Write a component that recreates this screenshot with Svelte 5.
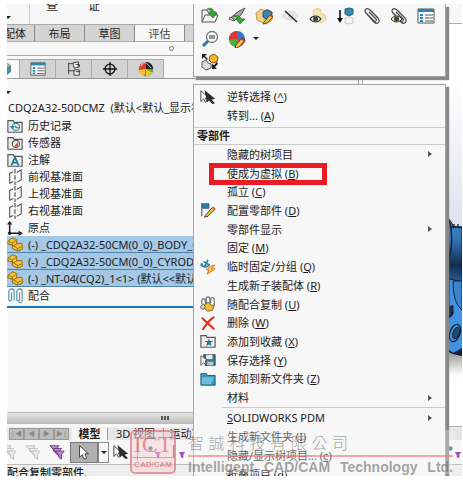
<script>
  const tree = [
    ['history', '历史记录'],
    ['sensor', '传感器'],
    ['note', '注解'],
    ['plane', '前视基准面'],
    ['plane', '上视基准面'],
    ['plane', '右视基准面'],
    ['origin', '原点'],
    ['part', '(-) _CDQ2A32-50CM(0_0)_BODY_CDQ2', true],
    ['part', '(-) _CDQ2A32-50CM(0_0)_CYROD_CDQ2', true],
    ['part', '(-) _NT-04(CQ2)_1<1> (默认<<默认>', true],
    ['mates', '配合'],
  ];
  const main = [
    ['', '隐藏的树项目', '', true],
    ['', '使成为虚拟', 'B'],
    ['', '孤立', 'C'],
    ['configure', '配置零部件', 'D'],
    ['', '零部件显示', '', true],
    ['', '固定', 'M'],
    ['group', '临时固定/分组', 'Q'],
    ['', '生成新子装配体', 'R'],
    ['copymates', '随配合复制', 'U'],
    ['delete', '删除', 'W'],
    ['favorite', '添加到收藏', 'X'],
    ['save', '保存选择', 'Y'],
    ['bluefolder', '添加到新文件夹', 'Z'],
    ['', '材料', '', true],
  ];
  const tools = ['open', 'opendrawing', 'editpart', 'hide', 'transparency', 'suppress', 'clip', 'clipeye', 'list'];
</script>

{#snippet icon(name)}
  <svg class="icon" viewBox="0 0 18 18" aria-hidden="true">
    {#if name === 'open'}
      <path d="M1 15V3h5l1 2h8v3" fill="#eee" stroke="#555" />
      <path d="M1 15 4 8h13l-3 7z" fill="#f4f4f4" stroke="#555" />
      <path d="M6 2c4-2 7 0 7 4h3l-4 5-5-5h3c0-2-1-3-4-4z" fill="#35a832" stroke="#147018" stroke-width=".6" />
    {:else if name === 'opendrawing'}
      <path d="M1 12 11 4l6-3-4 7-7 6z" fill="#a5a5a5" stroke="#555" />
      <path d="M1 11c2-1 5 0 5 3" fill="#eee" stroke="#444" />
      <path d="M5 9c4-1 8 0 8 3h4l-5 5-4-5h2c0-2-2-3-5-3z" fill="#35a832" stroke="#147018" stroke-width=".6" />
    {:else if name === 'editpart'}
      <path d="m1 6 5-4 4 2 2-2 5 3v8l-6 4-9-4z" fill="#f2cf87" stroke="#c39a4d" />
      <path d="m8 5 4-2 5 2-1 6-4 2-4-3z" fill="#3c86b4" stroke="#245876" />
      <path d="m9 15 6-7 3 2-6 6-4 1z" fill="#f5c33d" stroke="#333" stroke-width=".8" />
      <path d="m15 8 3 2" stroke="#d33" stroke-width="2" />
    {:else if name === 'hide'}
      <path d="M1 9c4-6 11-6 15 0-4 5-11 5-15 0z" fill="#eee" stroke="#ccc" />
      <circle cx="9" cy="9" r="3" fill="#ddd" />
      <path d="m3 4 12 11" stroke="#222" stroke-width="1.4" />
    {:else if name === 'transparency'}
      <path d="m4 4 4-3 4 2v4l4 1 1 5-5 3-6-3z" fill="#f6e6b8" stroke="#e0cb92" />
      <path d="M1 12c3-4 8-4 11 0-3 4-8 4-11 0z" fill="#eee" stroke="#333" stroke-width="1.2" />
      <circle cx="6.500" cy="12" r="2.500" fill="#3c4a32" />
    {:else if name === 'suppress'}
      <path d="M4 3v9" stroke="#111" stroke-width="1.600" />
      <path d="m1 11 3 5 3-5z" fill="#111" />
      <path d="m9 2 4-1 4 1v5l-4 2-4-2z" fill="#3d87ab" stroke="#235f7f" />
      <path d="m9 11 4-1 4 1v5l-4 1-4-1z" fill="#f3f3f3" stroke="#ccc" />
    {:else if name === 'clip' || name === 'clipeye'}
      <path d="m4 7 7 8c3 3 7 0 4-4L7 3C4 0 0 3 3 6l8 8c2 1 3-1 2-2L6 5" fill="none" stroke="#444" stroke-width="1.200" />
      {#if name === 'clipeye'}
        <path d="M1 12c3-4 8-4 11 0-3 4-8 4-11 0z" fill="#ddd" stroke="#333" />
        <circle cx="6.500" cy="12" r="2.500" fill="#3c4a32" />
      {/if}
    {:else if name === 'list'}
      <path d="M1 2h16v14H1z" fill="#fff" stroke="#555" />
      <path d="M1 2h16v3H1z" fill="#2588b2" />
      <path d="M3 8h3M3 11h3M3 14h3" stroke="#2588b2" stroke-width="2" />
      <path d="M8 8h8M8 11h8M8 14h8" stroke="#555" />
    {:else if name === 'magnifier'}
      <path d="m2 16 5-5" stroke="#2879a1" stroke-width="3" />
      <circle cx="11" cy="7" r="5.500" fill="#f3f7f9" stroke="#777" stroke-width="1.300" />
      <path d="M8 6h6M8 8h6" stroke="#333" />
    {:else if name === 'ball' || name === 'ballpen'}
      <circle cx="9" cy="9" r="8" fill="#3277d0" />
      <path d="M9 9V1a8 8 0 0 0-8 9z" fill="#e3362e" />
      {#if name === 'ballpen'}
        <path d="M9 9 1 10a8 8 0 0 0 8 7z" fill="#4cad3e" />
        <path d="M9 9v8a8 8 0 0 0 8-8z" fill="#d9432e" />
        <path d="m8 15 6-7 3 2-6 7-4 1z" fill="#f2c84c" stroke="#443311" stroke-width=".8" />
        <path d="m13 8 4 3" stroke="#d12a26" stroke-width="2" />
      {:else}
        <path d="M9 9V1a8 8 0 0 1 8 8z" fill="#222" />
        <path d="M9 9 1 10a8 8 0 0 0 6 7z" fill="#f1c326" />
        <path d="M9 9 7 17a8 8 0 0 0 10-8z" fill="#4cad3e" />
        <path d="M9 9v8a8 8 0 0 0 7-4z" fill="#f1c326" />
        <path d="m9 2 6 6" stroke="#ddd" />
        <path d="M3 6c1-2 3-4 5-4" stroke="#f3a09b" stroke-width="1.500" fill="none" />
      {/if}
    {:else if name === 'replace'}
      <path d="M1 1h5L4 3l3 3-1 1-3-3-2 2z" fill="#222" />
      <path d="m9 3 4-2 4 3-1 5-5 1-3-3z" fill="#f4b72b" stroke="#7b5a17" />
      <path d="m1 9 4-2 2 3 3 1v4l-5 2-4-3z" fill="#ddd" stroke="#555" />
      <path d="M11 16v-5l2 1 3-3 1 2-3 3 2 2z" fill="#222" />
    {:else if name === 'cursors'}
      <path d="M1 2v12l3-3 2 4 2-1-2-4h4z" fill="#fff" stroke="#333" />
      <path d="m5 1 12 10-4 1 4 4-3 1-4-4-2 2z" fill="#292f31" />
    {:else if name === 'cursor'}
      <path d="M4 2v13l3-3 2 5 3-1-2-5h4z" fill="#fff" stroke="#333" />
    {:else if name === 'configure'}
      <path d="M2 1v15" stroke="#333" />
      <path d="M3 2h7v5H3z" fill="#2f7fa6" stroke="#1d5572" />
      <path d="m6 15 8-9 3 2-8 8-4 1z" fill="#f2c43d" stroke="#333" />
      <path d="m14 6 3 2" stroke="#d95a4a" stroke-width="2" />
    {:else if name === 'group'}
      <path d="M1 5c2 5 7 5 10 1M9 1 5 9M1 8l2-3M4 3l7 4" stroke="#2a7d9f" stroke-width="1.800" fill="none" />
      <path d="m7 12 5-4 5-1-4 4h4l-7 5-2 1 2-5z" fill="#ffc63e" stroke="#d46d22" />
    {:else if name === 'copymates'}
      <path d="M2 9V6c0-4 4-4 4 0v7M7 8V4c0-4 4-4 4 0v6M12 8V4c0-3 4-3 4 0v7" stroke="#777" stroke-width="1.400" fill="none" />
      <path d="m5 10 4-3 3 3 4 1-2 5-5 1-4-3z" fill="#f3bd31" stroke="#715415" />
      <path d="m1 11 3-2 2 3-2 3-3-1z" fill="#e9dca2" stroke="#555" />
    {:else if name === 'delete'}
      <path d="m2 3 14 13M16 2C10 6 6 11 3 17" stroke="#e12f17" stroke-width="2.300" fill="none" />
    {:else if name === 'save'}
      <path d="M4 3h13v12H6z" fill="#3a7896" stroke="#333" />
      <path d="M7 3h7v5H7z" fill="#e9e9e9" />
      <path d="M8 11h7v4H8z" fill="#b7cbd3" />
      <path d="M1 4v11l3-3 3 3-1-5 2-1z" fill="#eee" stroke="#333" stroke-width=".8" />
    {:else if name === 'bluefolder'}
      <path d="M1 16V3h6l1 2h9v11z" fill="#3b99bf" stroke="#16536e" />
      <path d="M2 7h14l-4 8H2z" fill="#6dbbd6" />
    {:else if name === 'favorite' || name === 'history' || name === 'sensor' || name === 'note'}
      <path d="M1 16V3h6l1 2h9v11z" fill="#eee" stroke="#555" stroke-width="1.300" />
      {#if name === 'favorite'}
        <path d="m10 6 1 3h4l-3 2 1 4-3-2-3 2 1-4-3-2h4z" fill="#25799e" />
      {:else if name === 'history'}
        <circle cx="10" cy="10" r="4" fill="#fff" stroke="#2788ac" stroke-width="1.500" />
        <path d="M10 8v3h3" stroke="#333" fill="none" />
        <path d="M3 9h6l-3 4z" fill="#2788ac" />
      {:else if name === 'sensor'}
        <circle cx="10" cy="10" r="4" fill="#fff" stroke="#555" stroke-width="1.500" />
        <path d="m8 13 4-5v5z" fill="#db3022" />
      {:else}
        <path d="m5 15 4-9 4 9M6 12h6" stroke="#1e7396" stroke-width="1.800" fill="none" />
      {/if}
    {:else if name === 'plane'}
      <path d="M7 3 3 5v11l4-2M11 4l5-3v11l-5 3" fill="none" stroke="#555" stroke-width="1.200" />
      <path d="M9 0v18" stroke="#444" stroke-width="1.200" stroke-dasharray="5 2" />
    {:else if name === 'origin'}
      <path d="M3 15V3m0 12h13" stroke="#222" stroke-width="1.700" />
      <path d="m0 5 3-4 3 4zM13 12l5 3-5 3z" fill="#222" />
      <circle cx="3" cy="15" r="2" fill="#222" />
    {:else if name === 'part'}
      <path d="m1 6 5-4 5 2v5l5-1 2 4-1 3-5 2-6-3v-4l-5-1z" fill="#f6c431" stroke="#806018" />
      <path d="m2 6 4 2 4-3M6 8v3M11 9l-4 2 5 3 5-2M12 14v3" stroke="#8d691b" fill="none" />
    {:else if name === 'mates'}
      <path d="M5 5v8c0 2-3 2-3 0V4c0-4 6-4 6 0v10M14 5v8c0 2-3 2-3 0V4c0-4 6-4 6 0v10c0 3-3 3-4 2" stroke="#4c91ad" stroke-width="1.200" fill="none" />
    {:else if name === 'tree'}
      <path d="M3 2v13M3 3h5M3 11h6" stroke="#333" fill="none" />
      <path d="m8 2 6-1v6l-5 1zM9 10h6v6H9z" fill="#eee" stroke="#333" />
      <path d="M11 4h4v3M11 12h5" stroke="#333" fill="none" />
    {:else if name === 'target'}
      <circle cx="9" cy="9" r="5.500" fill="none" stroke="#111" stroke-width="1.500" />
      <path d="M9 1v16M1 9h16" stroke="#111" stroke-width="1.500" />
    {:else if name === 'cube'}
      <path d="m-6 4 5-2 5 3v7l-5 4-5-2z" fill="#f0c43b" stroke="#777" />
      <path d="m-1 7 5-2v7l-5 4z" fill="#3a8fb6" />
    {:else if name === 'filter' || name === 'filters'}
      <g fill={name === 'filters' ? '#c58bd2' : '#eee'} stroke={name === 'filters' ? '#67307b' : '#bbb'}>
        <path d="M1 2h10L8 6v4L5 8V6z" />
        <path d="M4 5h10l-3 4v4l-3-2V9z" />
        <path d="M7 8h10l-3 4v5l-3-2v-3z" />
      </g>
    {:else if name === 'vertex'}
      <circle cx="5" cy="5" r="2.500" fill="#3c6682" />
      <path d="M10 9h7l-2 3v4l-3-1v-3z" fill="#a04eb5" />
    {:else if name === 'edge'}
      <path d="M4 1v14" stroke="#356987" stroke-width="1.500" />
      <path d="M10 9h7l-2 3v4l-3-1v-3z" fill="#a04eb5" />
    {/if}
  </svg>
{/snippet}

{#snippet row(name, label, key, more)}
  <button class="item">
    <span class="slot">{#if name}{@render icon(name)}{/if}</span>
    <span>{label}{#if key}{' '}(<u>{key}</u>){/if}</span>
    {#if more}<i class="arrow"></i>{/if}
  </button>
{/snippet}

<main>
  <div class="window">
    <div class="work">
      <section class="left">
        <div class="ribbon"><i class="caret"></i><i class="rule"></i><span>查</span><span>证</span></div>
        <nav class="tabs">
          <button class="first">配体</button><button>布局</button><button>草图</button><button class="on">评估</button><button class="rest" aria-label="更多"></button>
        </nav>
        <div class="strip"><i class="ring"></i></div>
        <nav class="views">
          <button class="on" aria-label="特征">{@render icon('cube')}</button>
          <button aria-label="属性">{@render icon('list')}</button>
          <button aria-label="配置">{@render icon('tree')}</button>
          <button aria-label="尺寸">{@render icon('target')}</button>
          <button aria-label="外观">{@render icon('ball')}</button>
        </nav>
        <div class="fold"><i class="caret"></i></div>
        <div class="root">CDQ2A32-50DCMZ&nbsp; (默认&lt;默认_显示状态-1&gt;)</div>
        <ul>
          {#each tree as [name, label, selected]}
            <li class:selected>{@render icon(name)}<span>{label}</span></li>
          {/each}
        </ul>
        <div class="endline"></div>
        <div class="scroll"><i></i><i></i><i></i></div>
      </section>
      <section class="view">
        <svg class="model" viewBox="0 0 16 160" aria-hidden="true">
          <defs>
            <linearGradient id="tube" x1="0" y1="0" x2="0" y2="1">
              <stop offset="0" stop-color="#3f86cb" /><stop offset=".35" stop-color="#3476b8" />
              <stop offset=".75" stop-color="#142c4d" /><stop offset="1" stop-color="#285d97" />
            </linearGradient>
            <linearGradient id="shade" x1="0" y1="0" x2="0" y2="1">
              <stop offset="0" stop-color="#777" /><stop offset="1" stop-color="#fff" />
            </linearGradient>
          </defs>
          <path d="M0 130 16 140v20H0z" fill="url(#shade)" />
          <path d="M0 63h16v78L5 138 0 130z" fill="#4292e4" />
          <path d="M0 0 5 7l3 5 8 1v54L0 63z" fill="url(#tube)" stroke="#101d30" />
          <path d="M0 0c7 8 8 34 0 52M5 12h11M8 9v4M12 9v4" fill="none" stroke="#101d30" stroke-width="1.300" />
          <path d="M3 64v37M7 66c0 15 3 24 9 29M7 66h9v29" fill="#3b83cb" stroke="#122540" />
          <path d="M0 93c0 9 8 10 7 3V91H5c-2 4-2 4-5 2z" fill="#21364e" stroke="#101d30" />
          <path d="M0 103c4 0 6-2 7-6M0 129c0 8 7 10 16 11" fill="none" stroke="#101d30" stroke-width="1.500" />
          <path d="M16 133v8l-9-3z" fill="#13233b" />
          <ellipse cx="9" cy="118" rx="5" ry="9" transform="rotate(20 9 118)" fill="#4a97e2" stroke="#101d30" stroke-width="1.300" />
          <ellipse cx="10" cy="118" rx="3" ry="6" transform="rotate(20 10 118)" fill="#234b7a" stroke="#101d30" />
        </svg>
      </section>
    </div>
    <footer>
      <div class="sheets">
        <span class="nav"><i>|◀</i><i>◀</i><i>▶</i><i>▶|</i></span>
        <button class="on">模型</button><button>3D 视图</button><button>运动算例</button>
      </div>
      <div class="filters">
        {@render icon('filter')}{@render icon('filter')}{@render icon('filters')}
        <button class="pick" aria-label="选择">{@render icon('cursor')}</button><button class="drop" aria-label="更多"><i class="caret"></i></button>
        {@render icon('cursors')}<i class="rule"></i>{@render icon('vertex')}{@render icon('edge')}
        <span class="tail">{@render icon('vertex')}</span>
      </div>
      <div class="status">配合复制零部件.</div>
    </footer>
  </div>

  <div class="popup tools">
    {#each tools as name}<button aria-label={name}>{@render icon(name)}</button>{/each}
    <button class="newline" aria-label="放大">{@render icon('magnifier')}</button>
    <button aria-label="外观">{@render icon('ballpen')}</button>
    <i class="caret"></i>
    <button class="newline" aria-label="替换">{@render icon('replace')}</button>
  </div>

  <div class="popup menu">
    <div class="head">
      {@render row('cursors', '逆转选择', '^')}
      {@render row('', '转到...', 'A')}
    </div>
    <h2>零部件</h2>
    <div class="group">
      {#each main as [name, label, key, more]}
        {@render row(name, label, key, more)}
      {/each}
      <div class="mark"></div>
    </div>
    <div class="last">
      <button class="item"><span class="slot"></span><span><u>S</u>OLIDWORKS PDM</span><i class="arrow"></i></button>
      {@render row('', '生成新文件夹', 'I')}
      {@render row('', '隐藏/显示树项目...', 'c')}
      {@render row('', '折叠项目', 'd')}
    </div>
  </div>

  <div class="watermark">
    <div class="logo"><b>ICT</b><small>CAD/CAM</small></div>
    <div class="firm">
      <div class="zh">{#each '智誠科技有限公司' as c}<span>{c}</span>{/each}</div>
      <div class="en"><span>Intelligent</span><span>CAD/CAM</span><span>Technology</span><span>Ltd.</span></div>
    </div>
  </div>
</main>

<style>
  :global(body) { margin: 0; background: #fff; }
  * { box-sizing: border-box; }
  main {
    position: relative; height: 100vh; padding: 4px 1px 4px 7px; overflow: hidden;
    font: 11px/17px "Noto Sans", "Noto Sans CJK SC", sans-serif; color: #1c1c1c;
  }
  button { font: inherit; color: inherit; border: 0; padding: 0; margin: 0; background: none; }
  i { font-style: normal; }
  .icon { width: 16px; height: 16px; flex: none; display: block; }
  .caret { border: 3px solid transparent; border-top-color: #222; border-bottom: 0; width: 6px; height: 3px; }
  .window { height: 100%; display: flex; flex-direction: column; overflow: hidden; background: #f7f7f7; }
  .work { flex: 1; min-height: 0; display: flex; }
  .left { width: 352px; flex: none; border-right: 1px solid #999; overflow: hidden; white-space: nowrap; display: flex; flex-direction: column; }
  .left > * { flex: none; }
  .ribbon { height: 20px; display: flex; font-size: 12px; line-height: 4px; }
  .ribbon .caret { margin-top: 12px; margin-left: -2px; }
  .ribbon .rule { width: 1px; background: #ccc; margin: 0 16px 0 18px; }
  .ribbon span { width: 42px; }
  .tabs { height: 18px; display: flex; background: #d4d4d4; border-top: 1px solid #aaa; border-bottom: 1px solid #aaa; }
  .tabs button { width: 50px; border-right: 1px solid #888; }
  .tabs .first { width: 28px; text-align: left; text-indent: -3px; }
  .tabs .on { background: #f7f7f7; color: #444; }
  .tabs .rest { flex: 1; border: 0; }
  .strip { height: 14px; border-bottom: 1px solid #aaa; display: flex; align-items: center; }
  .ring { width: 5px; height: 5px; border: 1px solid #777; border-radius: 50%; margin-left: 162px; }
  .views { display: flex; height: 23px; padding-top: 3px; border-bottom: 1px solid #999; }
  .views button { width: 36px; display: flex; justify-content: center; align-items: center; background: #d3d3d3; border: 1px solid #aaa; border-left: 0; border-bottom: 0; }
  .views .on { width: 13px; justify-content: flex-start; background: #f7f7f7; overflow: hidden; }
  .fold { height: 20px; padding: 12px 0 0; }
  .fold .caret { display: block; margin-left: -2px; }
  .root { height: 18px; padding-left: 1px; }
  ul { list-style: none; margin: 0; padding: 0; }
  li { height: 17px; display: flex; align-items: center; gap: 5px; }
  .selected { background: #a5c8e6; border-bottom: 1px solid #4c83a8; }
  .endline { height: 2px; background: #1976bd; margin-top: 2px; }
  .scroll { margin: auto 0 3px; height: 12px; display: flex; gap: 1px; padding: 3px 0 3px 154px; background: linear-gradient(#e6e6e6, #bdbdbd); border: solid #bbb; border-width: 1px 0; }
  .scroll i { width: 2px; background: #555; }
  .view {
    flex: 1; min-width: 0; margin-top: 19px; padding-top: 191px; overflow: hidden; border: solid #aaa; border-width: 1px 0 1px 1px; margin-left: 3px;
    background: linear-gradient(#fff 15%, #dfe1ee 50%, #fff 90%);
  }
  .model { display: block; width: 16px; height: 160px; margin-left: auto; }
  .sheets { height: 13px; display: flex; background: #e6e6e6; border-top: 1px solid #eee; line-height: 12px; }
  .nav { display: flex; margin: 0 3px 0 2px; }
  .nav i { width: 15px; height: 12px; background: #bcbcbc; border: 1px solid #999; color: #8a8a8a; font-size: 7px; line-height: 10px; text-align: center; }
  .sheets button { width: 56px; border-right: 1px solid #999; }
  .sheets .on { width: 36px; background: #f7f7f7; font-weight: 600; }
  .filters { height: 24px; display: flex; align-items: center; gap: 8px; margin-left: -6px; }
  .pick { width: 28px; height: 21px; border: 1px solid #777; background: #b0b0b0; display: flex; align-items: center; justify-content: center; margin: 0 -8px 0 -3px; }
  .drop { width: 11px; height: 21px; border: 1px solid #888; display: flex; align-items: center; justify-content: center; margin-right: -4px; }
  .filters .rule { width: 1px; height: 18px; background: #999; }
  .tail { margin-left: auto; }
  .status { height: 12px; border-top: 1px solid #bbb; background: #eee; line-height: 16px; overflow: hidden; font-weight: 500; }

  .popup { position: absolute; left: 193px; width: 253px; background: #f7f7f7; border: 1px solid #a4a4a4; box-shadow: 3px 3px 1px #888; }
  .tools { top: 4px; height: 73px; border-top: 0; padding: 0 2px; display: grid; grid-template-columns: repeat(9, 27px); grid-template-rows: repeat(3, 23px); align-items: center; justify-items: center; }
  .tools .icon { width: 18px; height: 18px; }
  .tools .newline { grid-column: 1; }
  .tools .caret { justify-self: start; margin-left: 3px; }
  .menu { top: 84px; bottom: 4px; overflow: hidden; border-bottom: 0; clip-path: inset(0 -5px 0 0); }
  .item { position: relative; width: 100%; display: flex; align-items: center; text-align: left; white-space: nowrap; }
  .slot { width: 33px; padding-left: 6px; flex: none; }
  u { text-underline-offset: 1px; }
  .arrow { margin-left: auto; margin-right: 13px; border: 3px solid transparent; border-left: 4px solid #555; border-right: 0; }
  .head { padding: 2px 0; }
  .head .item { height: 19px; }
  h2 { font-size: 11px; line-height: 16px; margin: 0; padding-left: 3px; border: solid #ccc; border-width: 1px 0; }
  .group { position: relative; display: grid; grid-template-rows: repeat(14, 1fr); height: 262px; }
  .mark { position: absolute; left: 15px; top: 18px; width: 118px; height: 22px; border: 5px solid #ed1c24; }
  .last { border-top: 1px solid #ccc; margin-left: 28px; }
  .last .slot { width: 5px; padding: 0; }
  .last .item { height: 19px; }

  .watermark { position: absolute; left: 130px; right: 10px; bottom: 6px; height: 44px; display: flex; gap: 12px; pointer-events: none; }
  .logo { width: 46px; flex: none; border: 2px solid rgba(214, 80, 90, .5); border-radius: 5px; background: rgba(243, 210, 213, .5); text-align: center; color: rgba(214, 70, 82, .55); }
  .logo b { display: block; font: 24px/25px "Liberation Serif", serif; border-bottom: 1px solid rgba(214, 80, 90, .5); }
  .logo small { display: block; font: bold 8px/14px "Liberation Sans", sans-serif; }
  .firm { flex: 1; min-width: 0; color: rgba(105, 105, 105, .6); background: rgba(247, 247, 247, .3); }
  .zh { height: 25px; display: flex; justify-content: space-between; width: 160px; font: 16px/25px "Noto Sans CJK TC", sans-serif; font-weight: 300; }
  .en { border-top: 2px solid rgba(236, 100, 108, .55); display: flex; justify-content: space-between; font: bold 14px/21px "Liberation Sans", sans-serif; }
</style>
